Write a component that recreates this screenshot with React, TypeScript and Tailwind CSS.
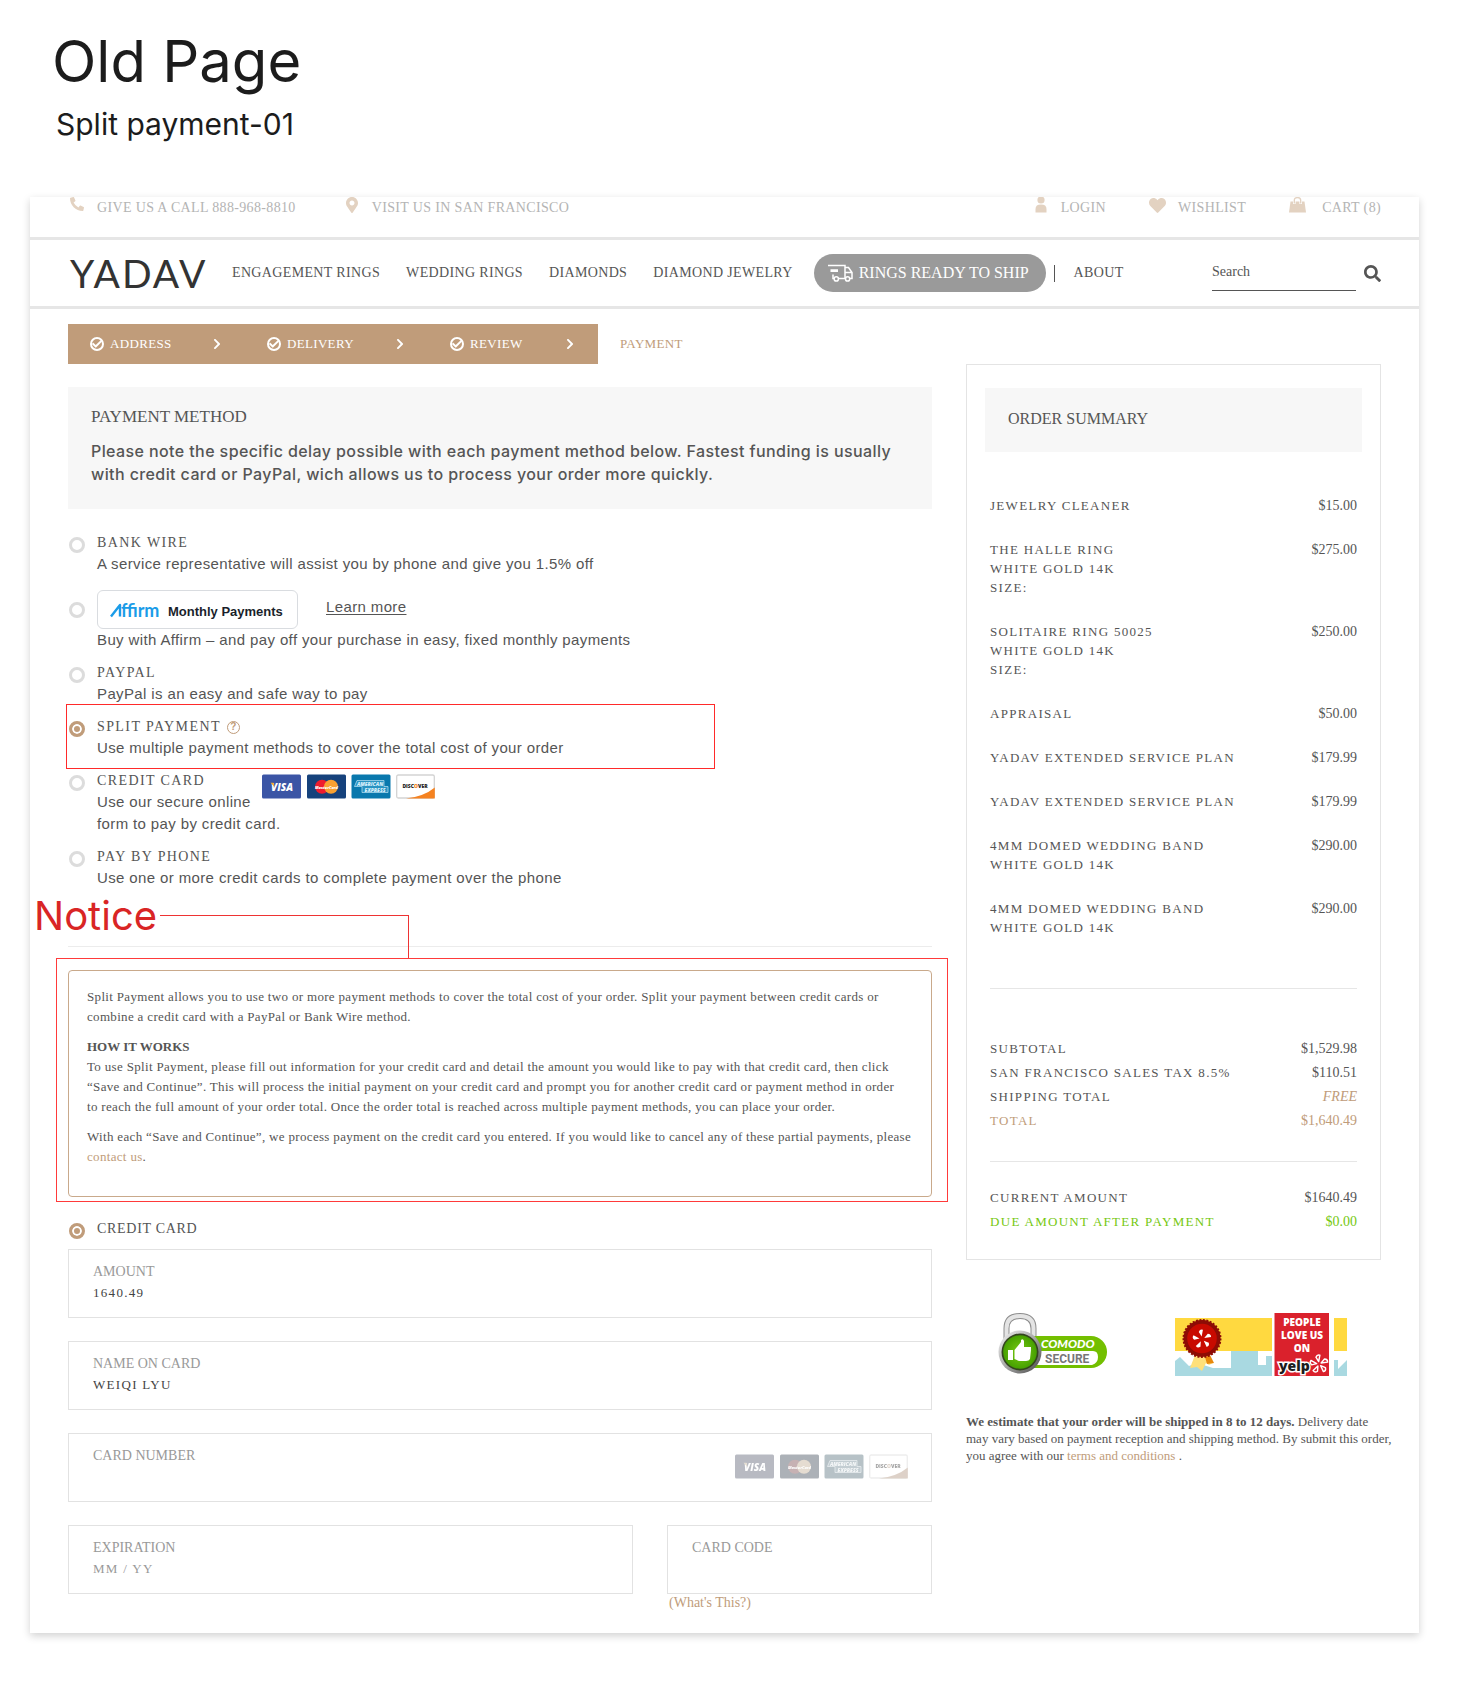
import React from "react";
import { FaCheck, FaChevronRight, FaHeart, FaMapMarkerAlt, FaPhoneAlt, FaSearch } from "react-icons/fa";

const SERIF = "font-['Liberation_Serif',serif]";
const SANS = "font-['Liberation_Sans',sans-serif]";

function PersonIcon() {
  return (
    <svg width="12" height="16" viewBox="0 0 12 16" fill="currentColor" aria-hidden="true">
      <circle cx="6" cy="3" r="3.6" />
      <path d="M0.5 15.5V12Q0.5 7.6 6 7.6T11.5 12V15.5Z" />
    </svg>
  );
}

function BagIcon() {
  return (
    <svg width="17" height="16" viewBox="0 0 17 16" aria-hidden="true">
      <path d="M1.5 4.5H15.5L17 15.5H0Z" fill="currentColor" />
      <path d="M5.3 7V3.4Q5.3 .6 8.5 .6T11.7 3.4V7" fill="none" stroke="#fff" strokeWidth="2.6" />
      <path d="M5.3 6.6V3.4Q5.3 .6 8.5 .6T11.7 3.4V6.6" fill="none" stroke="currentColor" strokeWidth="1.3" />
    </svg>
  );
}

function TruckIcon() {
  return (
    <svg width="25" height="18" viewBox="0 0 25 18" fill="none" stroke="currentColor" strokeWidth="1.5" aria-hidden="true">
      <path d="M0 1.5H17V14.5H10.5M2.5 6H10M2.5 7.3H10M5 10.5V14.5H6" />
      <path d="M17 3.5H20.5L24 8.5V14.5H21.8M17 8.5H23.5" />
      <circle cx="8.3" cy="14.9" r="2.1" />
      <circle cx="19.6" cy="14.9" r="2.1" />
    </svg>
  );
}

function AffirmLogo() {
  return (
    <svg width="50" height="24" viewBox="0 0 50 24" aria-label="Affirm" role="img">
      <path d="M1 18.5L10 7V18.5" fill="none" stroke="#1a9ce8" strokeWidth="2.4" strokeLinejoin="round" />
      <text x="11" y="19" fontSize="18" fontWeight="700" fill="#1a9ce8" fontFamily="Lato, sans-serif">
        ffirm
      </text>
    </svg>
  );
}

function CardLogos({ muted = false }: { muted?: boolean }) {
  return (
    <svg
      width="174"
      height="25"
      viewBox="0 0 174 25"
      role="img"
      aria-label="Visa, MasterCard, American Express, Discover"
      className={muted ? "opacity-40 saturate-[.25]" : ""}
    >
      <g fontFamily="Open Sans, sans-serif" fontWeight="800" fontStyle="italic" textAnchor="middle">
        <rect x="0" y="0.5" width="39" height="24" rx="1.5" fill="#3b55a5" />
        <text x="20" y="16.5" fontSize="10" fill="#fff">VISA</text>
        <path d="M8.5 8.8H11.5L12.5 13Z" fill="#f5a623" />

        <rect x="45" y="0.5" width="39" height="24" rx="1.5" fill="#16427c" />
        <circle cx="60" cy="12.7" r="7" fill="#ee1c2e" />
        <circle cx="69" cy="12.7" r="7" fill="#f9a131" />
        <text x="64.5" y="14.5" fontSize="4" fill="#fff">MasterCard</text>

        <rect x="89.5" y="0.5" width="39" height="24" rx="1.5" fill="#0978ad" />
        <path d="M95 6.5H122V12.5H126V18.5H100V12.5H92.5Z" fill="#2a93c2" stroke="#a9d8ee" strokeWidth=".8" />
        <text x="108" y="11.5" fontSize="5" fill="#d8f0fb">AMERICAN</text>
        <text x="113" y="17.5" fontSize="5" fill="#d8f0fb">EXPRESS</text>

        <rect x="134.7" y="1" width="37.6" height="23" rx="1.5" fill="#fff" stroke="#d3d3d3" strokeWidth="1.3" />
        <path d="M144 24.5Q162 22.5 172.8 13.5V24.5Z" fill="#f58220" />
        <text x="153" y="14" fontSize="5" fontStyle="normal" fill="#222">
          DISC<tspan fill="#f58220">O</tspan>VER
        </text>
      </g>
    </svg>
  );
}

function ComodoBadge() {
  return (
    <svg width="110" height="62" viewBox="0 0 110 62" role="img" aria-label="Comodo Secure">
      <defs>
        <linearGradient id="steel" x1="0" y1="0" x2="1" y2="1">
          <stop offset="0" stopColor="#f4f4f4" />
          <stop offset=".5" stopColor="#a8a8a8" />
          <stop offset="1" stopColor="#444" />
        </linearGradient>
        <radialGradient id="leaf">
          <stop offset="0" stopColor="#7acb14" />
          <stop offset="1" stopColor="#46a000" />
        </radialGradient>
      </defs>
      <path d="M8.5 29V15.5Q8.5 3 22 3T35.5 15.5V29" fill="none" stroke="#8d8d8d" strokeWidth="6" />
      <path d="M8.5 29V15.5Q8.5 3 22 3T35.5 15.5V29" fill="none" stroke="#e4e4e4" strokeWidth="4" />
      <path d="M30 23H93A16 16 0 0 1 93 55H30Z" fill="#73bf00" />
      <path d="M40 38H95Q100 38 100 44T94 52H36Z" fill="#fff" />
      <circle cx="22" cy="39" r="21.5" fill="url(#steel)" />
      <circle cx="22" cy="39" r="18.5" fill="#34451f" />
      <circle cx="22" cy="39" r="16.8" fill="url(#leaf)" />
      <path d="M10 37H15V47H10ZM16.5 37L23 29V27Q25 25 26 28V34H33V37L32 46Q31 48 28 48H21L16.5 46Z" fill="#fff" />
      <text x="43" y="35" fontSize="12" fontWeight="900" fontStyle="italic" fill="#fff" fontFamily="Lato, sans-serif">
        COMODO
      </text>
      <text x="47" y="50" fontSize="12" fontWeight="700" fill="#777" fontFamily="Roboto, sans-serif">
        SECURE
      </text>
    </svg>
  );
}

function YelpBurst({ x, y, s, fill, stroke }: { x: number; y: number; s: number; fill: string; stroke?: string }) {
  return (
    <g fill={fill} stroke={stroke} strokeWidth="1.5" strokeLinejoin="round">
      {[-8, 64, 136, 208, 280].map((a) => (
        <path key={a} d="M0 -2.5L-2.2 -7.5Q-.5 -10.5 2.2 -9Z" transform={`translate(${x} ${y}) rotate(${a}) scale(${s})`} />
      ))}
    </g>
  );
}

function YelpBadge() {
  return (
    <svg width="172" height="63" viewBox="0 0 172 63" role="img" aria-label="People love us on Yelp">
      <rect x="0" y="5" width="172" height="33" fill="#ffd940" />
      <path d="M0 63V48L5 44L14 53L22 50L38 55H56V38H83V52H91V43H97V63Z" fill="#a9d9e1" />
      <path d="M159 63V47H163V56L172 47V63Z" fill="#a9d9e1" />
      <path d="M20 42L15 55L22 54L27 58L31 50L34 52L38 50L33 40Z" fill="#ffe07a" />
      <path d="M30 44L32 51L39 50L35 42Z" fill="#e8890c" />
      <circle cx="27" cy="25.5" r="18.5" fill="#8d0c05" stroke="#8d0c05" strokeWidth="2" strokeDasharray="2 1.5" />
      <circle cx="27" cy="25.5" r="14.8" fill="#c80a00" />
      <YelpBurst x={27} y={26} s={1} fill="#fff" />
      <rect x="97" y="0" width="62" height="63" fill="#fff" />
      <rect x="99.5" y="0" width="54.5" height="63" fill="#da212c" />
      <g fontFamily="Open Sans, sans-serif" fontWeight="800" fill="#fff" textAnchor="middle" fontSize="10">
        <text x="127" y="12.5">PEOPLE</text>
        <text x="127" y="25.5">LOVE US</text>
        <text x="127" y="39">ON</text>
      </g>
      <text x="104" y="58" fontSize="14" fontWeight="800" fill="#1c1c1c" stroke="#fff" strokeWidth="3" paintOrder="stroke" fontFamily="Open Sans, sans-serif">
        yelp
      </text>
      <YelpBurst x={144} y={51} s={0.95} fill="#da212c" stroke="#fff" />
    </svg>
  );
}

function TopBar() {
  return (
    <div className="flex h-[43px] items-start justify-between border-b-[3px] border-[#e6e6e6] px-[38px] text-[14px] leading-[22px] tracking-wide text-[#b4b4b4]">
      <div className="flex gap-12">
        <a href="tel:8889688810" className="flex">
          <span className="w-[29px] pl-0.5 text-[#e3d2c1]"><FaPhoneAlt className="size-3.5" aria-hidden="true" /></span>
          GIVE US A CALL 888-968-8810
        </a>
        <a href="#visit" className="flex">
          <span className="w-7 text-[#e3d2c1]"><FaMapMarkerAlt className="size-4" aria-hidden="true" /></span>
          VISIT US IN SAN FRANCISCO
        </a>
      </div>
      <div className="flex gap-[43px]">
        <a href="#login" className="flex gap-3.5"><span className="text-[#e3d2c1]"><PersonIcon /></span>LOGIN</a>
        <a href="#wishlist" className="flex gap-3"><span className="text-[#e3d2c1]"><FaHeart className="size-[17px]" aria-hidden="true" /></span>WISHLIST</a>
        <a href="#cart" className="flex gap-4"><span className="text-[#e3d2c1]"><BagIcon /></span>CART (8)</a>
      </div>
    </div>
  );
}

function NavBar() {
  return (
    <div className="flex h-[69px] items-center justify-between border-b-[3px] border-[#e6e6e6] px-[38px] text-[#555]">
      <nav className="flex items-center text-[14px] leading-5 tracking-wide">
        <a href="#home" className="mr-6 w-[140px] pl-0.5 font-['Lato',sans-serif] text-[39px] leading-[48px] tracking-wider text-[#333]">YADAV</a>
        <div className="flex gap-[26px]">
          <a href="#engagement">ENGAGEMENT RINGS</a>
          <a href="#wedding">WEDDING RINGS</a>
          <a href="#diamonds">DIAMONDS</a>
          <a href="#jewelry">DIAMOND JEWELRY</a>
        </div>
        <a href="#ready" className="ml-[21px] flex h-[38px] items-center gap-1.5 rounded-full bg-[#9a9a9a] pr-[17px] pl-3.5 text-[16px] tracking-normal text-white">
          <TruckIcon />
          RINGS READY TO SHIP
        </a>
        <span className="mr-[19px] ml-2 h-[17px] w-px bg-[#555]" />
        <a href="#about">ABOUT</a>
      </nav>
      <form className="flex items-center gap-2" onSubmit={(e) => e.preventDefault()}>
        <input
          type="text"
          aria-label="Search"
          placeholder="Search"
          className="h-9 w-[144px] border-b border-[#555] pb-0.5 text-[14px] outline-none placeholder:text-[#555]"
        />
        <button type="submit" aria-label="Submit search"><FaSearch className="size-[17px]" /></button>
      </form>
    </div>
  );
}

function Steps() {
  const steps = [
    { name: "ADDRESS", cls: "w-[177px]" },
    { name: "DELIVERY", cls: "w-[183px]" },
    { name: "REVIEW", cls: "w-[170px]" },
  ];
  return (
    <ol className="flex h-10 items-center text-[13px] leading-5 tracking-wide">
      {steps.map((s) => (
        <li key={s.name} className={`flex h-10 items-center justify-between bg-[#c09c7a] px-[22px] text-white ${s.cls}`}>
          <a href={`#${s.name.toLowerCase()}`} className="flex items-center gap-1.5">
            <span className="flex size-3.5 items-center justify-center rounded-full border-2 border-white">
              <FaCheck className="size-2.5" aria-hidden="true" />
            </span>
            {s.name}
          </a>
          <FaChevronRight className="size-3" aria-hidden="true" />
        </li>
      ))}
      <li className="pl-[22px] text-[#c09c7a]">PAYMENT</li>
    </ol>
  );
}

function Radio({ id, name, checked = false, className = "" }: { id: string; name: string; checked?: boolean; className?: string }) {
  return (
    <input
      type="radio"
      id={id}
      name={name}
      defaultChecked={checked}
      className={`ml-px size-4 shrink-0 appearance-none rounded-full border-[3px] border-[#dcdcdc] bg-white checked:border-[#c09c7a] checked:bg-[#c09c7a] checked:shadow-[inset_0_0_0_2px_white] ${className}`}
    />
  );
}

function Option({
  id,
  title,
  checked,
  children,
}: {
  id: string;
  title: React.ReactNode;
  checked?: boolean;
  children: React.ReactNode;
}) {
  return (
    <div className="flex gap-3">
      <Radio id={id} name="method" checked={checked} className="mt-1" />
      <div>
        <label htmlFor={id} className="flex items-center gap-1.5 text-[14px] leading-5 tracking-widest">{title}</label>
        <p className={`text-[15px] leading-[22px] tracking-wide ${SANS}`}>{children}</p>
      </div>
    </div>
  );
}

function Methods() {
  return (
    <fieldset aria-label="Payment method" className="mt-6 flex flex-col gap-3">
      <Option id="wire" title="BANK WIRE">A service representative will assist you by phone and give you 1.5% off</Option>

      <div className="mt-[3px] flex gap-3">
        <Radio id="affirm" name="method" className="mt-3" />
        <div>
          <div className={`flex items-center ${SANS}`}>
            <label htmlFor="affirm" className="flex h-[39px] w-[201px] items-center gap-2 rounded-md border border-[#d9dce0] pl-3 text-[13px] font-bold text-[#1a1f2b]">
              <AffirmLogo />
              <span className="pt-1">Monthly Payments</span>
            </label>
            <a href="#affirm-info" className="mb-1.5 ml-7 text-[15px] leading-5 tracking-wide underline underline-offset-2">Learn more</a>
          </div>
          <p className={`text-[15px] leading-[22px] tracking-wide ${SANS}`}>
            Buy with Affirm – and pay off your purchase in easy, fixed monthly payments
          </p>
        </div>
      </div>

      <Option id="paypal" title="PAYPAL">PayPal is an easy and safe way to pay</Option>

      <div className="relative">
        <div className="pointer-events-none absolute -top-[13px] -left-0.5 h-[65px] w-[649px] border border-[#ff2a2a]" />
        <Option
          id="split"
          checked
          title={
            <>
              SPLIT PAYMENT
              <span className={`flex size-[13px] items-center justify-center rounded-full border border-[#c09c7a] text-[10px] font-bold tracking-normal text-[#c09c7a] ${SANS}`}>?</span>
            </>
          }
        >
          Use multiple payment methods to cover the total cost of your order
        </Option>
      </div>

      <div className="relative">
        <Option id="card" title="CREDIT CARD">
          Use our secure online
          <br />
          form to pay by credit card.
        </Option>
        <div className="absolute top-[3px] left-[194px]"><CardLogos /></div>
      </div>

      <Option id="phone" title="PAY BY PHONE">Use one or more credit cards to complete payment over the phone</Option>
    </fieldset>
  );
}

function Notice() {
  return (
    <div className="relative mt-[57px] border-t border-[#ececec] pt-[23px]">
      <div className="absolute -top-[54px] -left-[34px] flex items-start">
        <span className="w-[126px] font-['Inter',sans-serif] text-[40px] leading-[46px] whitespace-nowrap text-[#d92525]">Notice</span>
        <span className="mt-[22px] h-11 w-[249px] border-t border-r border-[#e33]" />
      </div>
      <div className="relative rounded border border-[#c9a98b] pt-4 pr-[15px] pb-[29px] pl-[18px] text-[13px] leading-5 tracking-wide">
        <div className="pointer-events-none absolute -top-[13px] -right-[17px] -bottom-1.5 -left-[13px] border border-[#ff3a3a]" />
        <p>
          Split Payment allows you to use two or more payment methods to cover the total cost of your order. Split your payment between credit cards or
          <br />
          combine a credit card with a PayPal or Bank Wire method.
        </p>
        <h3 className="mt-2.5 font-bold tracking-normal">HOW IT WORKS</h3>
        <p>
          To use Split Payment, please fill out information for your credit card and detail the amount you would like to pay with that credit card, then click
          <br />
          “Save and Continue”. This will process the initial payment on your credit card and prompt you for another credit card or payment method in order
          <br />
          to reach the full amount of your order total. Once the order total is reached across multiple payment methods, you can place your order.
        </p>
        <p className="mt-2.5">
          With each “Save and Continue”, we process payment on the credit card you entered. If you would like to cancel any of these partial payments, please
          <br />
          <a href="#contact" className="text-[#c09c7a]">contact us</a>.
        </p>
      </div>
    </div>
  );
}

function Field({ id, label, value, placeholder, children }: { id: string; label: string; value?: string; placeholder?: string; children?: React.ReactNode }) {
  return (
    <div className="flex h-[69px] items-start justify-between border border-[#e2e2e2] pt-3 pr-[22px] pl-6 text-[14px] leading-5">
      <div className="flex min-w-0 flex-1 flex-col gap-px">
        <label htmlFor={id} className="text-[#999]">{label}</label>
        <input
          id={id}
          type="text"
          defaultValue={value}
          placeholder={placeholder}
          className="h-5 w-full text-[13px] tracking-widest text-[#444] outline-none placeholder:text-[#999]"
        />
      </div>
      {children}
    </div>
  );
}

function CardForm() {
  return (
    <form onSubmit={(e) => e.preventDefault()}>
      <div className="mt-[22px] flex gap-3">
        <Radio id="pay-card" name="source" checked className="mt-1" />
        <label htmlFor="pay-card" className="text-[14px] leading-5 tracking-wider">CREDIT CARD</label>
      </div>
      <div className="mt-2.5 flex flex-col gap-[23px]">
        <Field id="amount" label="AMOUNT" value="1640.49" />
        <Field id="name" label="NAME ON CARD" value="WEIQI LYU" />
        <Field id="number" label="CARD NUMBER">
          <div className="pt-2"><CardLogos muted /></div>
        </Field>
        <div className="flex gap-[34px]">
          <div className="flex-1"><Field id="exp" label="EXPIRATION" placeholder="MM / YY" /></div>
          <div className="w-[265px]">
            <Field id="code" label="CARD CODE" />
            <a href="#code-help" className="block pl-0.5 text-[14px] leading-[18px] text-[#c09c7a]">(What's This?)</a>
          </div>
        </div>
      </div>
    </form>
  );
}

const items: { lines: string[]; price: string }[] = [
  { lines: ["JEWELRY CLEANER"], price: "$15.00" },
  { lines: ["THE HALLE RING", "WHITE GOLD 14K", "SIZE:"], price: "$275.00" },
  { lines: ["SOLITAIRE RING 50025", "WHITE GOLD 14K", "SIZE:"], price: "$250.00" },
  { lines: ["APPRAISAL"], price: "$50.00" },
  { lines: ["YADAV EXTENDED SERVICE PLAN"], price: "$179.99" },
  { lines: ["YADAV EXTENDED SERVICE PLAN"], price: "$179.99" },
  { lines: ["4MM DOMED WEDDING BAND", "WHITE GOLD 14K"], price: "$290.00" },
  { lines: ["4MM DOMED WEDDING BAND", "WHITE GOLD 14K"], price: "$290.00" },
];

const totals = [
  { name: "SUBTOTAL", value: "$1,529.98", row: "", cell: "" },
  { name: "SAN FRANCISCO SALES TAX 8.5%", value: "$110.51", row: "", cell: "" },
  { name: "SHIPPING TOTAL", value: "FREE", row: "", cell: "text-[#c09c7a] italic" },
  { name: "TOTAL", value: "$1,640.49", row: "text-[#c09c7a]", cell: "" },
];

const balance = [
  { name: "CURRENT AMOUNT", value: "$1640.49", row: "", cell: "" },
  { name: "DUE AMOUNT AFTER PAYMENT", value: "$0.00", row: "text-[#76c811]", cell: "" },
];

function Totals({ rows, className }: { rows: typeof totals; className: string }) {
  return (
    <div className={`border-t border-[#e6e6e6] ${className}`}>
      <table className="w-full text-[13px] leading-6">
        <tbody>
          {rows.map((r) => (
            <tr key={r.name} className={r.row}>
              <th scope="row" className="p-0 text-left font-normal tracking-widest">{r.name}</th>
              <td className={`p-0 text-right text-[14px] ${r.cell}`}>{r.value}</td>
            </tr>
          ))}
        </tbody>
      </table>
    </div>
  );
}

function Summary() {
  return (
    <aside className="w-[415px] shrink-0">
      <section className="border border-[#e4e4e4] px-[18px] pt-[23px] pb-[25px]">
        <h2 className="bg-[#f7f7f7] px-[23px] pt-[19px] pb-[21px] text-[16px] leading-6">ORDER SUMMARY</h2>
        <div className="px-[5px]">
          <table className="mt-11 w-full text-[13px] leading-[19px]">
            <tbody>
              {items.map((it, i) => (
                <tr key={i} className="align-top">
                  <td className="p-0 pb-[25px] tracking-widest">
                    {it.lines.map((l) => <div key={l}>{l}</div>)}
                  </td>
                  <td className="p-0 pb-[25px] text-right text-[14px]">{it.price}</td>
                </tr>
              ))}
            </tbody>
          </table>
          <Totals rows={totals} className="mt-[26px] pt-12" />
          <Totals rows={balance} className="mt-7 pt-6" />
        </div>
      </section>
      <div className="mt-[53px] flex items-start justify-between pr-[34px] pl-8">
        <ComodoBadge />
        <YelpBadge />
      </div>
      <p className="mt-[37px] -mr-5 text-[13px] leading-[17px]">
        <strong>We estimate that your order will be shipped in 8 to 12 days.</strong> Delivery date
        <br />
        may vary based on payment reception and shipping method. By submit this order,
        <br />
        you agree with our <a href="#terms" className="text-[#c09c7a]">terms and conditions</a> .
      </p>
    </aside>
  );
}

export default function App() {
  return (
    <div className={`bg-white pb-14 text-[#555] ${SERIF}`}>
      <header className="px-[52px] pt-7 font-['Inter',sans-serif] text-[#1c1c1c]">
        <h1 className="text-[58px] leading-[66px]">Old Page</h1>
        <p className="mt-3 pl-1 text-[30px] leading-9">Split payment-01</p>
      </header>
      <main className="mx-11 mt-[55px] ml-[30px] bg-white pb-[21px] shadow-[0_3px_8px_rgba(0,0,0,0.18)]">
        <TopBar />
        <NavBar />
        <div className="px-[38px] pt-[15px]">
          <Steps />
          <div className="flex items-start gap-[34px]">
            <div className="min-w-0 flex-1">
              <section className="mt-[23px] h-[122px] bg-[#f7f7f7] pt-[18px] pr-6 pl-[23px]">
                <h2 className="text-[17px] leading-6">PAYMENT METHOD</h2>
                <p className="mt-[11px] font-['Inter',sans-serif] text-[16px] leading-[23px] font-medium tracking-wide">
                  Please note the specific delay possible with each payment method below. Fastest funding is usually with credit card or PayPal, wich allows us
                  to process your order more quickly.
                </p>
              </section>
              <Methods />
              <Notice />
              <CardForm />
            </div>
            <Summary />
          </div>
        </div>
      </main>
    </div>
  );
}
